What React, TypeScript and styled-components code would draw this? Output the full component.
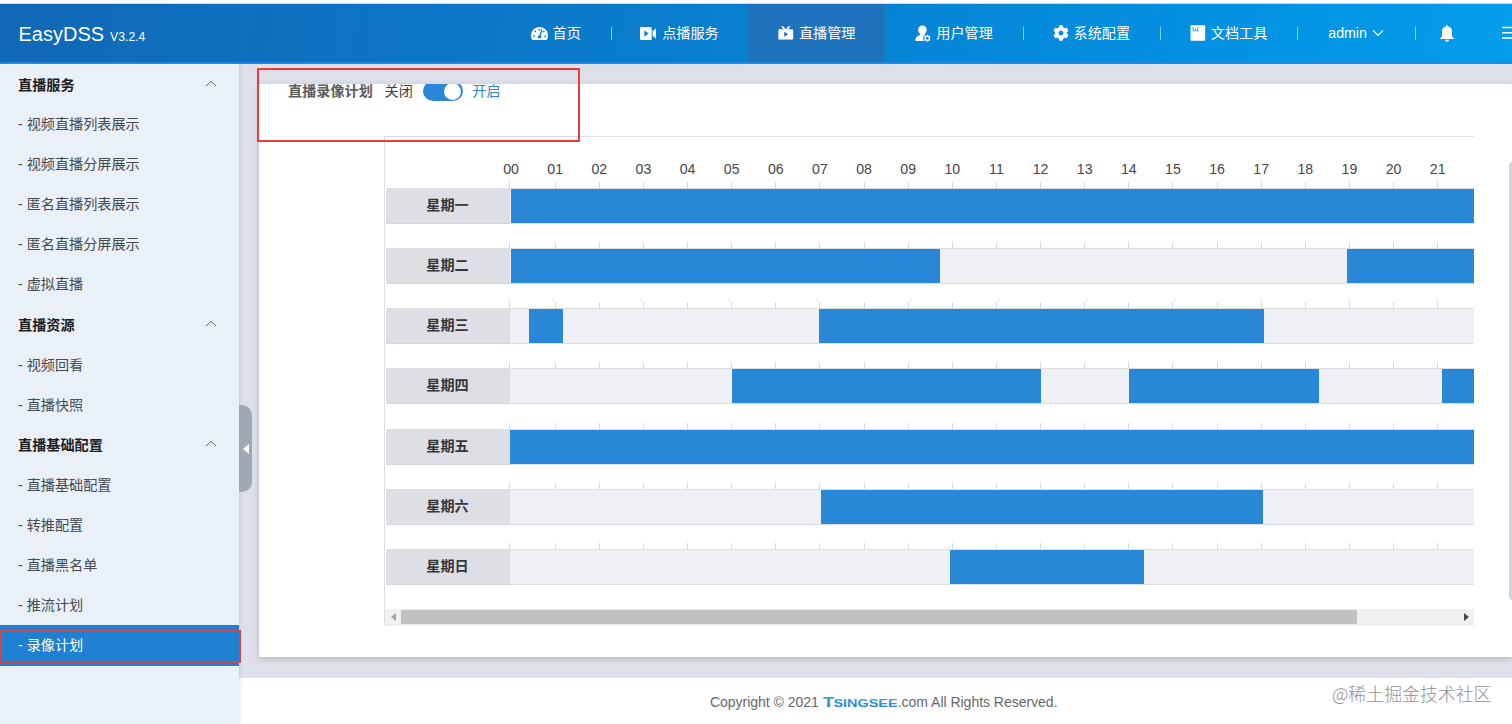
import React from "react";
import styled, { createGlobalStyle } from "styled-components";
import { FaTachometerAlt, FaCog } from "react-icons/fa";

const HOUR = 44.14;
const END = 21.87;

const GlobalStyle = createGlobalStyle`
  *, *::before, *::after { box-sizing: border-box; }
  body {
    margin: 0;
    overflow: hidden;
    font-family: "Liberation Sans", "Noto Sans CJK SC", sans-serif;
    font-size: 14.15px;
    color: #333;
    background: #fff;
  }
`;

const Page = styled.div`
  position: relative;
  display: flex;
  flex-direction: column;
  width: 1512px;
  height: 724px;
  padding-top: 3px;
  overflow: hidden;
`;

const Header = styled.header`
  display: flex;
  flex: none;
  align-items: stretch;
  height: 61px;
  border-top: 1px solid #c4dcee;
  border-bottom: 2px solid #1c8ae8;
  background: linear-gradient(98deg, #1068b6 0%, #0b78c8 34%, #0684d4 58%, #0391e2 80%, #039deb 100%);
  color: #fff;
`;

const Brand = styled.div`
  display: flex;
  flex: none;
  align-items: baseline;
  gap: 6px;
  width: 473.5px;
  padding: 18px 0 0 18.5px;
  font-size: 20px;
  line-height: 24px;
`;

const Version = styled.span`
  font-size: 12.2px;
`;

const NavItem = styled.div<{ $active?: boolean; $divider?: boolean; $width?: number; $indent?: number }>`
  display: flex;
  flex: none;
  align-items: center;
  justify-content: center;
  gap: 5px;
  width: ${(p) => p.$width ?? 137.3}px;
  height: 58px;
  padding-left: ${(p) => p.$indent ?? 0}px;
  background: ${(p) => (p.$active ? "#1f72bc" : "transparent")};
  line-height: 20px;
  white-space: nowrap;

  &::after {
    content: "";
    display: ${(p) => (p.$divider ? "block" : "none")};
    width: 1px;
    height: 13px;
    margin-right: -1px;
    margin-left: auto;
    background: rgba(255, 255, 255, 0.55);
  }
  &::before {
    content: "";
    display: ${(p) => (p.$divider ? "block" : "none")};
    margin-right: auto;
  }
  svg { flex: none; display: block; }
`;

const MenuToggle = styled.div`
  display: flex;
  flex: none;
  align-items: center;
  margin-left: 22px;
`;

const Body = styled.div`
  display: flex;
  flex: 1;
  min-height: 0;
`;

const Sidebar = styled.aside`
  position: relative;
  z-index: 1;
  flex: none;
  width: 239px;
  padding-top: 0.6px;
  background: #e9f0f8;
  box-shadow: 1px 0 3px rgba(120, 130, 150, 0.25);
`;

const GroupTitle = styled.div`
  display: flex;
  align-items: center;
  justify-content: space-between;
  height: 40.07px;
  padding: 0 22px 2px 18px;
  color: #1d1d1f;
  font-weight: 700;
`;

const MenuItem = styled.div<{ $active?: boolean }>`
  display: flex;
  align-items: center;
  height: 40.07px;
  padding: 0 0 3px 18px;
  background: ${(p) => (p.$active ? "#1f80d2" : "transparent")};
  color: ${(p) => (p.$active ? "#fff" : "#444a50")};
  white-space: pre;
`;

const CollapseHandle = styled.div`
  position: absolute;
  top: 341px;
  left: 239px;
  display: flex;
  align-items: center;
  justify-content: flex-end;
  width: 13px;
  height: 87px;
  padding-right: 3px;
  border-radius: 0 10px 10px 0;
  background: #a0a9b3;
`;

const Content = styled.div`
  display: flex;
  flex: 1;
  flex-direction: column;
  min-width: 0;
`;

const Main = styled.main`
  flex: none;
  height: 613.5px;
  padding: 20px 0 0 20px;
  background: #dde0e8;
`;

const Card = styled.section`
  display: flex;
  flex-direction: column;
  height: 573px;
  padding-left: 29px;
  overflow: hidden;
  background: #fff;
  box-shadow: 0 2px 6px rgba(80, 85, 100, 0.28);
`;

const PlanBar = styled.div`
  display: flex;
  flex: none;
  align-items: center;
  height: 20px;
  margin-top: -3px;
  margin-bottom: 35px;
  line-height: 20px;
`;

const PlanLabel = styled.strong`
  width: 96.5px;
  color: #5b5d61;
`;

const SwitchText = styled.span<{ $on?: boolean }>`
  color: ${(p) => (p.$on ? "#2c82d4" : "#3c3e42")};
`;

const Switch = styled.span`
  display: flex;
  align-items: center;
  justify-content: flex-end;
  width: 40px;
  height: 20px;
  margin: 0 9.5px 0 10px;
  padding-right: 2px;
  border-radius: 10px;
  background: #2a86d6;

  &::after {
    content: "";
    width: 17px;
    height: 17px;
    border-radius: 50%;
    background: #fff;
  }
`;

const Schedule = styled.div`
  display: flex;
  flex: none;
  flex-direction: column;
  width: 1090px;
  height: 490px;
  margin-left: 96px;
  border-top: 1px solid #dcdee3;
  border-left: 1px solid #dcdee3;
`;

const Hours = styled.div`
  display: flex;
  flex: none;
  height: 45px;
  padding: 23px 0 0 104px;
  color: #45474b;
  line-height: 18px;
`;

const Hour = styled.span`
  flex: none;
  width: ${HOUR}px;
  text-align: center;
`;

const DayRow = styled.div`
  display: grid;
  flex: none;
  grid-template: 6px 36px / 124px 1fr;
  height: 60.15px;
`;

const Ticks = styled.div`
  display: flex;
  grid-column: 2;
  overflow: hidden;
`;

const Tick = styled.i`
  flex: none;
  width: ${HOUR}px;
  border-left: 1px solid #d6d9de;

  &:first-child { width: ${HOUR + 1.5}px; }
`;

const DayName = styled.div`
  display: flex;
  align-items: center;
  justify-content: center;
  margin-left: 1px;
  padding-bottom: 3px;
  border-bottom: 1px solid #d3d7dd;
  background: #dddfe5;
  color: #34363a;
  font-weight: 700;
`;

const Track = styled.div`
  display: flex;
  overflow: hidden;
  border: solid #dadde2;
  border-width: 1px 0 1px 1px;
  background: #eff0f4;
`;

const Segment = styled.span<{ $gap: number; $length: number }>`
  flex: none;
  width: ${(p) => p.$length * HOUR}px;
  height: 35px;
  margin-left: ${(p) => p.$gap * HOUR}px;
  background: #2987d8;
`;

const Scrollbar = styled.div`
  display: flex;
  flex: none;
  align-items: center;
  justify-content: space-between;
  height: 17px;
  margin-top: 6px;
  padding: 0 5px 0 6px;
  background: #f0f0f1;
`;

const Thumb = styled.div`
  width: 955.5px;
  height: 14px;
  margin-right: auto;
  margin-left: 5px;
  background: #c1c1c1;
`;

const Footer = styled.footer`
  display: flex;
  flex: 1;
  align-items: center;
  padding: 3px 0 0 471px;
  background: #fff;
  color: #66686b;
  font-size: 14px;
  letter-spacing: -0.02px;
  white-space: pre;
`;

const PageScroll = styled.div`
  position: absolute;
  top: 162px;
  left: 1509px;
  width: 8px;
  height: 438px;
  border-radius: 4px;
  background: #d0d3d8;
`;

const Highlight = styled.div<{ $x: number; $y: number; $w: number; $h: number; $soft?: boolean }>`
  position: absolute;
  z-index: 3;
  top: ${(p) => p.$y}px;
  left: ${(p) => p.$x}px;
  width: ${(p) => p.$w}px;
  height: ${(p) => p.$h}px;
  border: 2px solid ${(p) => (p.$soft ? "#cf454e" : "#ee3a3a")};
`;

const Watermark = styled.div`
  position: absolute;
  top: 680.5px;
  right: 20.5px;
  color: #909295;
  font-family: "Noto Sans CJK SC", sans-serif;
  font-size: 17.9px;
  font-weight: 300;
  line-height: 24px;
`;

const VideoIcon = () => (
  <svg width="17" height="13" viewBox="0 0 17 13" fill="#fff">
    <path fillRule="evenodd" d="M1.2 0h9.3q1.2 0 1.2 1.2v10.6q0 1.2-1.2 1.2H1.2Q0 13 0 11.800V1.200Q0 0 1.200 0ZM4.300 3.500v6l4.400-3Z" />
    <path d="M12.600 4.300 16 1.300v10.400l-3.400-3Z" />
  </svg>
);

const LiveIcon = () => (
  <svg width="16" height="16" viewBox="0 0 16 16" fill="#fff">
    <path fillRule="evenodd" d="M1.500 4.200h12.600q1.100 0 1.100 1.200v8q0 1.200-1.100 1.200H1.500Q.4 14.600.4 13.400v-8q0-1.200 1.100-1.200ZM6.200 6.800v5l4-2.500Z" />
    <path d="m3.900 1.400 3 3m4.700-3-3 3" stroke="#fff" strokeWidth="1.500" />
  </svg>
);

const UserIcon = () => (
  <svg width="16" height="17" viewBox="0 0 16 17" fill="#fff">
    <path d="M7.400.4c2.700 0 4.300 1.900 4.300 4.400 0 1.700-.7 3.200-1.900 4.100l.2.800c-1.200.8-1.900 2-1.900 3.400 0 1.300.5 2.300 1.300 3H1.300c-.9 0-1.100-.6-1-1.300.2-2.300 1.400-3.800 4.600-4.900l.2-1c-1.200-.9-1.900-2.400-1.900-4.100C3.200 2.300 4.700.4 7.400.4Z" />
    <circle cx="12.300" cy="13.300" r="2.200" fill="none" stroke="#fff" strokeWidth="1.500" />
    <path d="M12.300 10v1m0 4.700v1M9.400 11.700l.9.500m4 2.300.9.500m0-3.300-.9.500m-4 2.300-.9.500" stroke="#fff" />
  </svg>
);

const DocIcon = () => (
  <svg width="16" height="16" viewBox="0 0 16 16">
    <rect x=".5" y=".2" width="14.700" height="15.600" rx="1" fill="#fff" />
    <path d="M3.200 2v4h1.300l1-1 1 1h1.300V2M5.500 3.200V5" fill="none" stroke="#168fd8" strokeWidth=".9" />
  </svg>
);

const BellIcon = () => (
  <svg width="16" height="17" viewBox="0 0 16 17" fill="#fff">
    <path d="M8 0q.9 0 .9 1.200c2.600.5 4.100 2.500 4.100 5.100v3.900c0 1.300.7 2.100 2.100 3.200v.7H.9v-.7C2.300 12.300 3 11.500 3 10.200V6.300c0-2.600 1.500-4.600 4.100-5.100Q7.100 0 8 0ZM5.900 14.800h4.200c-.3 1.300-1 1.900-2.100 1.900s-1.800-.6-2.100-1.900Z" />
  </svg>
);

const Chevron = ({ down = false }: { down?: boolean }) => (
  <svg width="12" height="8" viewBox="0 0 12 8" fill="none" stroke={down ? "#fff" : "#555c65"} strokeWidth={down ? 1.200 : 1}>
    <path d={down ? "m1 1.300 5 5 5-5" : "m1 6.200 5-5 5 5"} />
  </svg>
);

const Logo = () => (
  <svg width="75" height="14" viewBox="0 0 75 14">
    <defs>
      <linearGradient id="brand" x1="0" y1="0" x2="0" y2="1">
        <stop offset="0" stopColor="#43a6e4" />
        <stop offset="1" stopColor="#2676cb" />
      </linearGradient>
    </defs>
    <g fill="url(#brand)" fontFamily="Liberation Sans" fontWeight="700">
      <text x="0" y="12" fontSize="14.500" textLength="11" lengthAdjust="spacingAndGlyphs">T</text>
      <text x="10.500" y="12" fontSize="11" textLength="64" lengthAdjust="spacingAndGlyphs">SINGSEE</text>
    </g>
  </svg>
);

const groups = [
  { title: "直播服务", items: ["视频直播列表展示", "视频直播分屏展示", "匿名直播列表展示", "匿名直播分屏展示", "虚拟直播"] },
  { title: "直播资源", items: ["视频回看", "直播快照"] },
  { title: "直播基础配置", items: ["直播基础配置", "转推配置", "直播黑名单", "推流计划", "录像计划"] },
];

const days: { name: string; ranges: [number, number][] }[] = [
  { name: "星期一", ranges: [[0.03, END]] },
  { name: "星期二", ranges: [[0.03, 9.75], [18.97, END]] },
  { name: "星期三", ranges: [[0.42, 1.21], [7.01, 17.09]] },
  { name: "星期四", ranges: [[5.02, 12.04], [14.02, 18.33], [21.11, END]] },
  { name: "星期五", ranges: [[0.001, END]] },
  { name: "星期六", ranges: [[7.04, 17.06]] },
  { name: "星期日", ranges: [[9.96, 14.37]] },
];

const hours = Array.from({ length: 22 }, (_, i) => String(i).padStart(2, "0"));

export default function App() {
  return (
    <Page>
      <GlobalStyle />
      <Header>
        <Brand>EasyDSS<Version>V3.2.4</Version></Brand>
        <NavItem $divider $indent={27}><FaTachometerAlt size={17} />首页</NavItem>
        <NavItem><VideoIcon />点播服务</NavItem>
        <NavItem $active><LiveIcon />直播管理</NavItem>
        <NavItem $divider><UserIcon />用户管理</NavItem>
        <NavItem $divider><FaCog size={16} />系统配置</NavItem>
        <NavItem $divider><DocIcon />文档工具</NavItem>
        <NavItem $divider $width={117.5}>admin<Chevron down /></NavItem>
        <NavItem $width={65}><BellIcon /></NavItem>
        <MenuToggle>
          <svg width="16" height="14" viewBox="0 0 16 14" stroke="#fff" strokeWidth="1.500">
            <path d="M0 1.500h16M0 6.800h16M0 12h16" />
          </svg>
        </MenuToggle>
      </Header>
      <Body>
        <Sidebar>
          {groups.map((group) => (
            <React.Fragment key={group.title}>
              <GroupTitle>{group.title}<Chevron /></GroupTitle>
              {group.items.map((item) => (
                <MenuItem key={item} $active={item === "录像计划"}>{"- " + item}</MenuItem>
              ))}
            </React.Fragment>
          ))}
          <CollapseHandle>
            <svg width="6" height="10" viewBox="0 0 6 10" fill="#fff"><path d="M6 0v10L0 5Z" /></svg>
          </CollapseHandle>
        </Sidebar>
        <Content>
          <Main>
            <Card>
              <PlanBar>
                <PlanLabel>直播录像计划</PlanLabel>
                <SwitchText>关闭</SwitchText>
                <Switch />
                <SwitchText $on>开启</SwitchText>
              </PlanBar>
              <Schedule>
                <Hours>{hours.map((h) => <Hour key={h}>{h}</Hour>)}</Hours>
                {days.map((day) => (
                  <DayRow key={day.name}>
                    <Ticks>{hours.map((h) => <Tick key={h} />)}</Ticks>
                    <DayName>{day.name}</DayName>
                    <Track>
                      {day.ranges.map(([from, to], i) => (
                        <Segment key={from} $gap={from - (i ? day.ranges[i - 1][1] : 0)} $length={to - from} />
                      ))}
                    </Track>
                  </DayRow>
                ))}
                <Scrollbar>
                  <svg width="5" height="8" viewBox="0 0 5 8" fill="#a3a3a3"><path d="M5 0v8L0 4Z" /></svg>
                  <Thumb />
                  <svg width="5" height="8" viewBox="0 0 5 8" fill="#454545"><path d="M0 0v8l5-4Z" /></svg>
                </Scrollbar>
              </Schedule>
            </Card>
          </Main>
          <Footer>{"Copyright © 2021 "}<Logo />.com All Rights Reserved.</Footer>
        </Content>
      </Body>
      <PageScroll />
      <Highlight $x={257} $y={68} $w={323} $h={74} />
      <Highlight $x={0} $y={630} $w={241} $h={33} $soft />
      <Watermark>@稀土掘金技术社区</Watermark>
    </Page>
  );
}
